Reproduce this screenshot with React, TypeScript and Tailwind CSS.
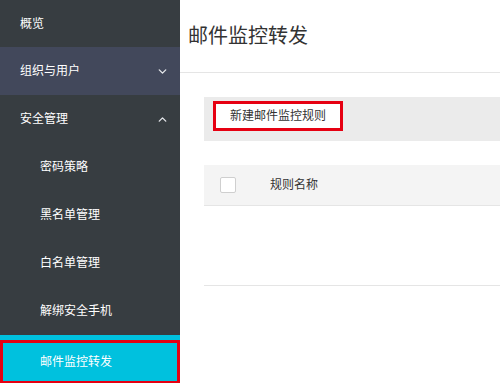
import { ChevronDown, ChevronUp } from 'lucide-react';

const font = { fontFamily: '"Liberation Sans", "Noto Sans CJK SC", sans-serif' };

const subItems = ['密码策略', '黑名单管理', '白名单管理', '解绑安全手机'];

export default function App() {
  return (
    <div className="flex w-[500px] h-[383px] overflow-hidden bg-white" style={font}>
      <aside className="w-[180px] shrink-0 bg-[#373d41] text-white text-[12px]">
        <div className="h-[47px] flex items-center pl-5">概览</div>
        <div className="h-[48px] flex items-center justify-between pl-5 pr-[11px] bg-[#42485b]">
          <span>组织与用户</span>
          <ChevronDown size={13} strokeWidth={2.5} className="text-[#e4e6ea]" />
        </div>
        <div className="h-[48px] flex items-center justify-between pl-5 pr-[11px]">
          <span>安全管理</span>
          <ChevronUp size={13} strokeWidth={2.5} className="text-[#e4e6ea]" />
        </div>
        {subItems.map((item) => (
          <div key={item} className="h-[48px] flex items-center pl-10">
            {item}
          </div>
        ))}
        <div className="h-[48px] bg-[#00c1de] pt-[5px]">
          <div className="h-[44px] border-[3px] border-[#e60012] flex items-center pl-[37px]">
            邮件监控转发
          </div>
        </div>
      </aside>

      <main className="flex-1 min-w-0">
        <div className="h-[73px] border-b border-[#e5e5e5] flex items-center pl-2">
          <h1 className="text-[20px] text-[#333] font-normal">邮件监控转发</h1>
        </div>
        <div className="pl-6 pt-6">
          <div className="h-[44px] bg-[#ebebeb] flex items-start pt-[4px] pl-[9px]">
            <button className="h-[30px] px-[14px] bg-white border-[3px] border-[#e60012] text-[12px] text-[#333]">
              新建邮件监控规则
            </button>
          </div>
          <div className="mt-6 h-[41px] bg-[#f4f4f4] border-b border-[#e5e5e5] flex items-center">
            <span className="ml-4 w-4 h-4 bg-white border border-[#cfcfcf] rounded-[2px]" />
            <span className="ml-[34px] text-[12px] text-[#333]">规则名称</span>
          </div>
          <div className="h-[80px] border-b border-[#e5e5e5]" />
        </div>
      </main>
    </div>
  );
}
